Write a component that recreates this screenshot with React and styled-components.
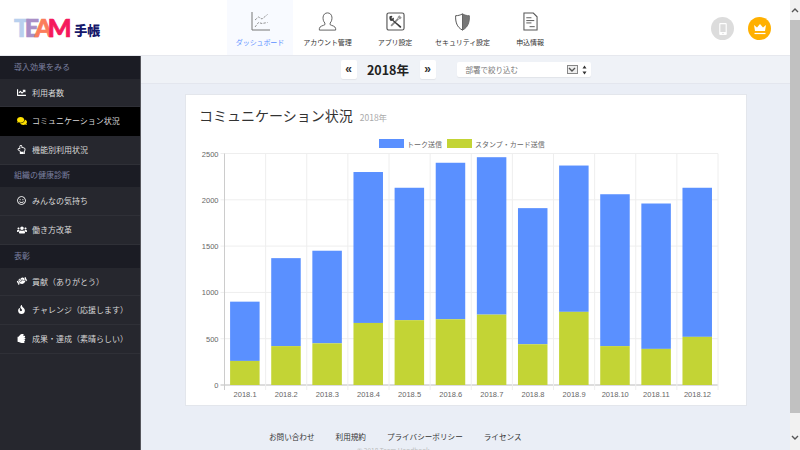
import React from 'react'
import styled, { createGlobalStyle } from 'styled-components'
import {
  FaChartLine, FaComments, FaRegHandPointUp, FaRegSmile, FaUsers,
  FaHandshake, FaFire, FaHandRock, FaMobileAlt,
} from 'react-icons/fa'

const GlobalStyle = createGlobalStyle`
  html, body { margin: 0; padding: 0; height: 450px; overflow: hidden; }
  body { font-family: "Noto Sans CJK JP", "Noto Sans", sans-serif; background: #eaeef6; }
`

const Page = styled.div`
  display: flex;
  width: 800px;
  height: 450px;
  overflow: hidden;
`
const Content = styled.div`
  width: 790px;
  display: flex;
  flex-direction: column;
`
const Header = styled.header`
  display: flex;
  height: 56px;
  flex-shrink: 0;
  background: #fff;
  border-bottom: 1px solid #e6e8ee;
  box-sizing: border-box;
`
const LogoBox = styled.div`
  width: 227px;
  padding: 14px 0 0 14px;
  box-sizing: border-box;
  display: flex;
  align-items: flex-start;
`
const Logo = styled.div`
  display: flex;
  align-items: flex-end;
  height: 26px;
  font-family: "Lato", sans-serif;
  font-weight: 900;
  font-size: 25px;
  line-height: 26px;
  letter-spacing: -4.4px;
`
const LogoLetter = styled.span`
  color: ${p => p.$color};
  -webkit-text-stroke: 0.7px ${p => p.$color};
`
const LogoKanji = styled.span`
  font-family: "Noto Sans CJK JP", sans-serif;
  font-size: 13px;
  line-height: 20px;
  letter-spacing: 0;
  font-weight: 900;
  color: #16186b;
  margin-left: 7px;
`
const Nav = styled.nav`
  display: flex;
`
const NavItem = styled.a`
  width: ${p => p.$w}px;
  display: flex;
  flex-direction: column;
  align-items: center;
  padding-top: 12px;
  box-sizing: border-box;
  background: ${p => (p.$active ? '#f8faff' : 'transparent')};
  color: ${p => (p.$active ? '#5a8fff' : '#333')};
  font-size: 7px;
  line-height: 10px;
  letter-spacing: -0.1px;
  white-space: nowrap;
`
const NavIcon = styled.span`
  height: 19px;
  margin-bottom: 6px;
  display: flex;
  align-items: center;
  justify-content: center;
`
const HeaderRight = styled.div`
  margin-left: auto;
  display: flex;
  gap: 14px;
  padding: 17px 19px 0 0;
`
const Round = styled.div`
  width: 23px;
  height: 23px;
  border-radius: 50%;
  background: ${p => p.$bg};
  color: #fff;
  display: flex;
  align-items: center;
  justify-content: center;
  font-size: 12px;
`
const Body = styled.div`
  flex: 1;
  display: flex;
  min-height: 0;
`
const Side = styled.aside`
  width: 141px;
  flex-shrink: 0;
  background: #26272e;
  border-right: 1px solid #55565c;
  box-sizing: border-box;
`
const SideTitle = styled.div`
  height: ${p => p.$h}px;
  background: #1b1c24;
  color: #7c80a0;
  font-size: 8px;
  line-height: ${p => p.$h - 2}px;
  padding-left: 14px;
`
const SideItem = styled.div`
  height: ${p => p.$h}px;
  display: flex;
  align-items: center;
  background: ${p => (p.$active ? '#000' : 'transparent')};
  color: #d8d8d8;
  font-size: 8px;
  padding-bottom: 1px;
  border-bottom: 1px solid ${p => (p.$active ? '#000' : '#2f3037')};
  box-sizing: border-box;
`
const SideIcon = styled.span`
  width: 32px;
  flex-shrink: 0;
  display: flex;
  justify-content: center;
  padding: 0 5px 0 16px;
  box-sizing: border-box;
  font-size: ${p => p.$size || 10}px;
  color: ${p => p.$color || '#fff'};
  svg { transform: rotate(${p => p.$tilt || 0}deg); }
`
const Main = styled.main`
  flex: 1;
  display: flex;
  flex-direction: column;
  min-width: 0;
`
const Toolbar = styled.div`
  height: 28px;
  flex-shrink: 0;
  background: #eff2f7;
  border-bottom: 1px solid #e3e6ee;
  box-sizing: border-box;
  display: flex;
  align-items: center;
  justify-content: center;
`
const PageBtn = styled.button`
  width: 16px;
  height: 19px;
  padding: 0;
  border: 0;
  border-radius: 2px;
  background: #fff;
  box-shadow: 0 1px 1px rgba(0, 0, 0, 0.06);
  font-family: "Liberation Sans", sans-serif;
  font-weight: 700;
  font-size: 12px;
  line-height: 15px;
  color: #333;
`
const Year = styled.div`
  width: 63px;
  text-align: center;
  font-size: 12.5px;
  font-weight: 700;
  color: #222;
`
const Filter = styled.div`
  width: 134px;
  height: 15px;
  margin-left: 21px;
  background: #fff;
  border-radius: 2px;
  box-shadow: 0 1px 1px rgba(0, 0, 0, 0.06);
  display: flex;
  align-items: center;
  padding-left: 9px;
  box-sizing: border-box;
  font-size: 7.5px;
  color: #777;
`
const FilterArrow = styled.span`
  margin-left: auto;
  width: 11px;
  height: 9px;
  border: 1px solid #888;
  background: #eee;
  box-sizing: border-box;
  display: flex;
  align-items: center;
  justify-content: center;
`
const Stepper = styled.span`
  width: 12px;
  margin-left: 1px;
  display: flex;
  justify-content: center;
`
const Card = styled.section`
  margin: 10px 43px 0 44px;
  height: 312px;
  flex-shrink: 0;
  background: #fff;
  border: 1px solid #e3e6ec;
  box-sizing: border-box;
`
const CardHead = styled.div`
  display: flex;
  align-items: baseline;
  padding: 8px 0 0 13px;
  height: 38px;
  box-sizing: border-box;
`
const CardTitle = styled.h2`
  margin: 0;
  font-size: 14px;
  line-height: 24px;
  font-weight: 400;
  color: #333;
`
const CardYear = styled.span`
  margin-left: 7px;
  font-size: 8.5px;
  color: #aaa;
`
const Footer = styled.footer`
  padding: 24px 0 0 128px;
`
const FooterLinks = styled.div`
  display: flex;
  gap: 21px;
  font-size: 7.6px;
  line-height: 14px;
  color: #333;
`
const Copy = styled.div`
  margin: 1px 0 0 88px;
  font-size: 6.5px;
  line-height: 10px;
  color: #bbb;
`
const ScrollBar = styled.div`
  width: 10px;
  background: #f1f1f1;
  display: flex;
  flex-direction: column;
  align-items: center;
`
const ScrollArrow = styled.div`
  height: 20px;
  flex-shrink: 0;
  display: flex;
  align-items: center;
  justify-content: center;
  margin-top: ${p => p.$mt || 0}px;
`
const ScrollThumb = styled.div`
  width: 10px;
  height: 393px;
  background: #c1c1c1;
`

const months = ['2018.1', '2018.2', '2018.3', '2018.4', '2018.5', '2018.6', '2018.7', '2018.8', '2018.9', '2018.10', '2018.11', '2018.12']
const totals = [900, 1370, 1450, 2300, 2130, 2400, 2460, 1910, 2370, 2060, 1960, 2130]
const greens = [260, 420, 450, 670, 700, 710, 760, 440, 790, 420, 390, 520]

// svg coordinates are card-relative (card inner starts at 186,96 on the page)
const Chart = () => {
  const left = 38.5
  const right = 532
  const top = 57.5
  const bottom = 289
  const step = (right - left) / 12
  const y = v => bottom - (v / 2500) * (bottom - top)
  const label = { fontFamily: '"Liberation Sans", sans-serif', fontSize: 7.5, fill: '#666' }
  const legend = '"Noto Sans CJK JP", sans-serif'
  return (
    <svg width="560" height="272" viewBox="0 37 560 272" style={{ display: 'block' }}>
      <rect x="193" y="43" width="25" height="9" fill="#5a90ff" />
      <text x="221" y="50.5" fontSize="7" fill="#666" fontFamily={legend}>トーク送信</text>
      <rect x="261" y="43" width="25" height="9" fill="#c3d435" />
      <text x="289" y="50.5" fontSize="7" fill="#666" fontFamily={legend}>スタンプ・カード送信</text>

      {[0, 500, 1000, 1500, 2000, 2500].map(v => (
        <g key={v}>
          <line x1={left - 4} x2={right} y1={y(v)} y2={y(v)} stroke={v === 0 ? '#bbb' : '#eee'} />
          <text x={left - 6} y={y(v) + 3} textAnchor="end" style={label}>{v}</text>
        </g>
      ))}
      {months.map((m, i) => (
        <line key={m} x1={left + i * step} x2={left + i * step} y1={top} y2={bottom + 5} stroke={i === 0 ? '#ccc' : '#eee'} />
      ))}
      <line x1={right} x2={right} y1={top} y2={bottom + 5} stroke="#eee" />
      {months.map((m, i) => {
        const x = left + i * step + 5.6
        return (
          <g key={m}>
            <rect x={x} y={y(totals[i])} width="29.5" height={y(greens[i]) - y(totals[i])} fill="#5a90ff" />
            <rect x={x} y={y(greens[i])} width="29.5" height={bottom - y(greens[i])} fill="#c3d435" />
            <text x={x + 15} y={bottom + 12} textAnchor="middle" style={label}>{m}</text>
          </g>
        )
      })}
    </svg>
  )
}

const stroke = { fill: 'none', stroke: '#555', strokeWidth: 1 }

const IconChart = () => (
  <svg width="19" height="19" viewBox="0 0 19 19">
    <path d="M1 0V18H19" {...stroke} stroke="#777" />
    <path d="M4 8L7.5 5L11 7L16.5 2.5M4 15L7.5 10.5L11 11.5L16.5 10.5" {...stroke} stroke="#777" strokeWidth=".8" strokeDasharray="2.4 1.2" />
  </svg>
)
const IconUser = () => (
  <svg width="19" height="19" viewBox="0 0 21 21">
    <path d="M7.6 12.2C6 10.6 5.4 8 5.6 5.6C6 2.6 8 1 10.5 1C13 1 15 2.6 15.4 5.6C15.6 8 15 10.6 13.4 12.2V14C14.6 15 19.5 15.4 19.5 18.4V20H1.5V18.4C1.5 15.4 6.4 15 7.6 14Z" {...stroke} />
  </svg>
)
const IconTools = () => (
  <svg width="19" height="19" viewBox="0 0 20 20">
    <rect x="1" y="1" width="18" height="18" rx="2" fill="none" stroke="#555" strokeWidth="1.2" />
    <path d="M14 3.4L16.6 6L14.6 8L12 5.4Z" fill="#999" />
    <path d="M13 7L5.4 14.6" stroke="#888" strokeWidth="1.8" fill="none" />
    <path d="M3.8 4.6L6 4L6.8 5L5.6 6.2L6.4 7L7.6 5.8L8.4 6.8L8 8.6L15.8 15C16.6 16.4 15.4 17 14.4 16.2L6.8 9.2L5 9.4C3.6 8.4 3.2 6.2 3.8 4.6Z" fill="#3c3c3c" />
  </svg>
)
const IconShield = () => (
  <svg width="17" height="18" viewBox="0 0 18 20">
    <path d="M9 1C6.5 2.4 4 3 1.4 3C1 9.6 2.6 15.8 9 19Z" fill="none" stroke="#555" strokeWidth="1.1" />
    <path d="M9 1C11.5 2.4 14 3 16.6 3C17 9.6 15.4 15.8 9 19Z" fill="#777" stroke="#666" strokeWidth="1" />
  </svg>
)
const IconDoc = () => (
  <svg width="15" height="19" viewBox="0 0 16 20">
    <path d="M1 1H11L15 5V19H1Z" fill="none" stroke="#555" strokeWidth="1.1" />
    <path d="M3.5 6H9M3.5 9H12M3.5 11.5H9M7 15.5H12.5" stroke="#555" strokeWidth="1" fill="none" />
  </svg>
)
const IconCrown = () => (
  <svg width="14" height="12" viewBox="0 0 14 12">
    <path d="M1 2L4 4.6L7 1L10 4.6L13 2L12 8H2Z" fill="#fff" />
    <path d="M1.5 10.5H12.5" stroke="#fff" strokeWidth="1.2" />
  </svg>
)

const navItems = [
  { w: 66, label: 'ダッシュボード', icon: <IconChart />, active: true },
  { w: 69, label: 'アカウント管理', icon: <IconUser /> },
  { w: 66, label: 'アプリ設定', icon: <IconTools /> },
  { w: 69, label: 'セキュリティ設定', icon: <IconShield /> },
  { w: 66, label: '申込情報', icon: <IconDoc /> },
]

const Chevron = ({ up }) => (
  <svg width="8" height="5" viewBox="0 0 8 5">
    <path d={up ? 'M1 4L4 1L7 4' : 'M1 1L4 4L7 1'} fill="none" stroke="#555" strokeWidth="1.4" />
  </svg>
)

export default function App() {
  return (
    <Page>
      <GlobalStyle />
      <Content>
        <Header>
          <LogoBox>
            <Logo>
              <LogoLetter $color="#b9d0ee">T</LogoLetter>
              <LogoLetter $color="#a98fc6">E</LogoLetter>
              <LogoLetter $color="#fb7d5b">A</LogoLetter>
              <LogoLetter $color="#f5195c">M</LogoLetter>
              <LogoKanji>手帳</LogoKanji>
            </Logo>
          </LogoBox>
          <Nav>
            {navItems.map(n => (
              <NavItem key={n.label} $w={n.w} $active={n.active}>
                <NavIcon>{n.icon}</NavIcon>
                {n.label}
              </NavItem>
            ))}
          </Nav>
          <HeaderRight>
            <Round $bg="#dcdcdc"><FaMobileAlt /></Round>
            <Round $bg="#ffb000"><IconCrown /></Round>
          </HeaderRight>
        </Header>
        <Body>
          <Side>
            <SideTitle $h={23}>導入効果をみる</SideTitle>
            <SideItem $h={28}><SideIcon $size={9}><FaChartLine /></SideIcon>利用者数</SideItem>
            <SideItem $h={29} $active><SideIcon $color="#ffe100"><FaComments /></SideIcon>コミュニケーション状況</SideItem>
            <SideItem $h={29}><SideIcon $size={9}><FaRegHandPointUp /></SideIcon>機能別利用状況</SideItem>
            <SideTitle $h={22}>組織の健康診断</SideTitle>
            <SideItem $h={29}><SideIcon $size={9}><FaRegSmile /></SideIcon>みんなの気持ち</SideItem>
            <SideItem $h={29}><SideIcon><FaUsers /></SideIcon>働き方改革</SideItem>
            <SideTitle $h={23}>表彰</SideTitle>
            <SideItem $h={28}><SideIcon $tilt={-25}><FaHandshake /></SideIcon>貢献（ありがとう）</SideItem>
            <SideItem $h={29}><SideIcon $size={9}><FaFire /></SideIcon>チャレンジ（応援します）</SideItem>
            <SideItem $h={29}><SideIcon $size={9} $tilt={90}><FaHandRock /></SideIcon>成果・達成（素晴らしい）</SideItem>
          </Side>
          <Main>
            <Toolbar>
              <PageBtn>«</PageBtn>
              <Year>2018年</Year>
              <PageBtn>»</PageBtn>
              <Filter>
                部署で絞り込む
                <FilterArrow><Chevron /></FilterArrow>
                <Stepper>
                  <svg width="5" height="10" viewBox="0 0 5 10"><path d="M2.5 0.5L4.5 3.5H0.5ZM2.5 9.5L0.5 6.5H4.5Z" fill="#333" /></svg>
                </Stepper>
              </Filter>
            </Toolbar>
            <Card>
              <CardHead>
                <CardTitle>コミュニケーション状況</CardTitle>
                <CardYear>2018年</CardYear>
              </CardHead>
              <Chart />
            </Card>
            <Footer>
              <FooterLinks>
                <span>お問い合わせ</span>
                <span>利用規約</span>
                <span>プライバシーポリシー</span>
                <span>ライセンス</span>
              </FooterLinks>
              <Copy>© 2018 Team Handbook</Copy>
            </Footer>
          </Main>
        </Body>
      </Content>
      <ScrollBar>
        <ScrollArrow><Chevron up /></ScrollArrow>
        <ScrollThumb />
        <ScrollArrow $mt={14}><Chevron /></ScrollArrow>
      </ScrollBar>
    </Page>
  )
}
